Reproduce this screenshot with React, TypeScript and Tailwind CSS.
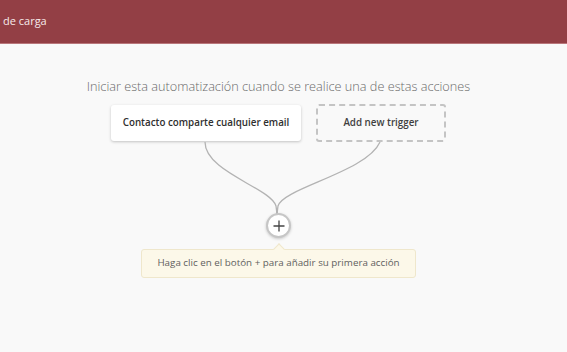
import React from 'react';

const font = { fontFamily: '"Open Sans", "Liberation Sans", sans-serif' };

const App: React.FC = () => {
  return (
    <div className="w-[567px] h-[352px] bg-[#f9f9f9] overflow-hidden" style={font}>
      {/* header bar */}
      <div className="h-[44px] bg-[#933f45] border-b border-[#b9777b] flex items-center pl-[3px]">
        <span className="text-[11px] text-[#f6eaea]">de carga</span>
      </div>

      <div className="w-[557px] flex flex-col items-center pt-[32px]">
        <h1 className="text-[12.7px] leading-[20px] font-light text-[#6a6a6a]">
          Iniciar esta automatización cuando se realice una de estas acciones
        </h1>

        {/* triggers */}
        <div className="flex items-start gap-[15px] mt-[8px]">
          <div className="mt-px w-[190px] h-[36px] bg-white rounded-[3px] shadow-[0_1px_3px_rgba(0,0,0,0.22)] flex items-center justify-center text-[9.8px] font-semibold text-[#2f2f2f]">
            Contacto comparte cualquier email
          </div>
          <div className="w-[130px] h-[38px] rounded-[3px] border-2 border-dashed border-[#c4c4c4] flex items-center justify-center text-[9.8px] font-semibold text-[#3f3f3f]">
            Add new trigger
          </div>
        </div>

        {/* connectors */}
        <svg width="335" height="72" viewBox="0 0 335 72" className="block">
          <path d="M94 0 C94 30, 160 46, 165 64 L166 72" fill="none" stroke="#b3b3b3" strokeWidth="1.3" />
          <path d="M269 0 C256 30, 172 46, 167 64 L166 72" fill="none" stroke="#b3b3b3" strokeWidth="1.3" />
        </svg>

        {/* add button */}
        <button className="w-[25px] h-[25px] -mt-px rounded-full bg-white border-2 border-[#c6c6c6] shadow-[0_1px_3px_rgba(0,0,0,0.2)] flex items-center justify-center">
          <svg width="12" height="12" viewBox="0 0 12 12">
            <path d="M6 0.5 V11.5 M0.5 6 H11.5" stroke="#444" strokeWidth="1.3" />
          </svg>
        </button>

        {/* hint */}
        <div className="relative mt-[11px] w-[275px] h-[29px] bg-[#fcf8e9] border border-[#efe7cc] rounded-[3px] flex items-center justify-center text-[9.8px] text-[#5f5f5f]">
          <span className="absolute -top-[5px] left-1/2 -ml-[4px] w-[8px] h-[8px] rotate-45 bg-[#fcf8e9] border-l border-t border-[#efe7cc]" />
          Haga clic en el botón + para añadir su primera acción
        </div>
      </div>
    </div>
  );
};

export default App;
